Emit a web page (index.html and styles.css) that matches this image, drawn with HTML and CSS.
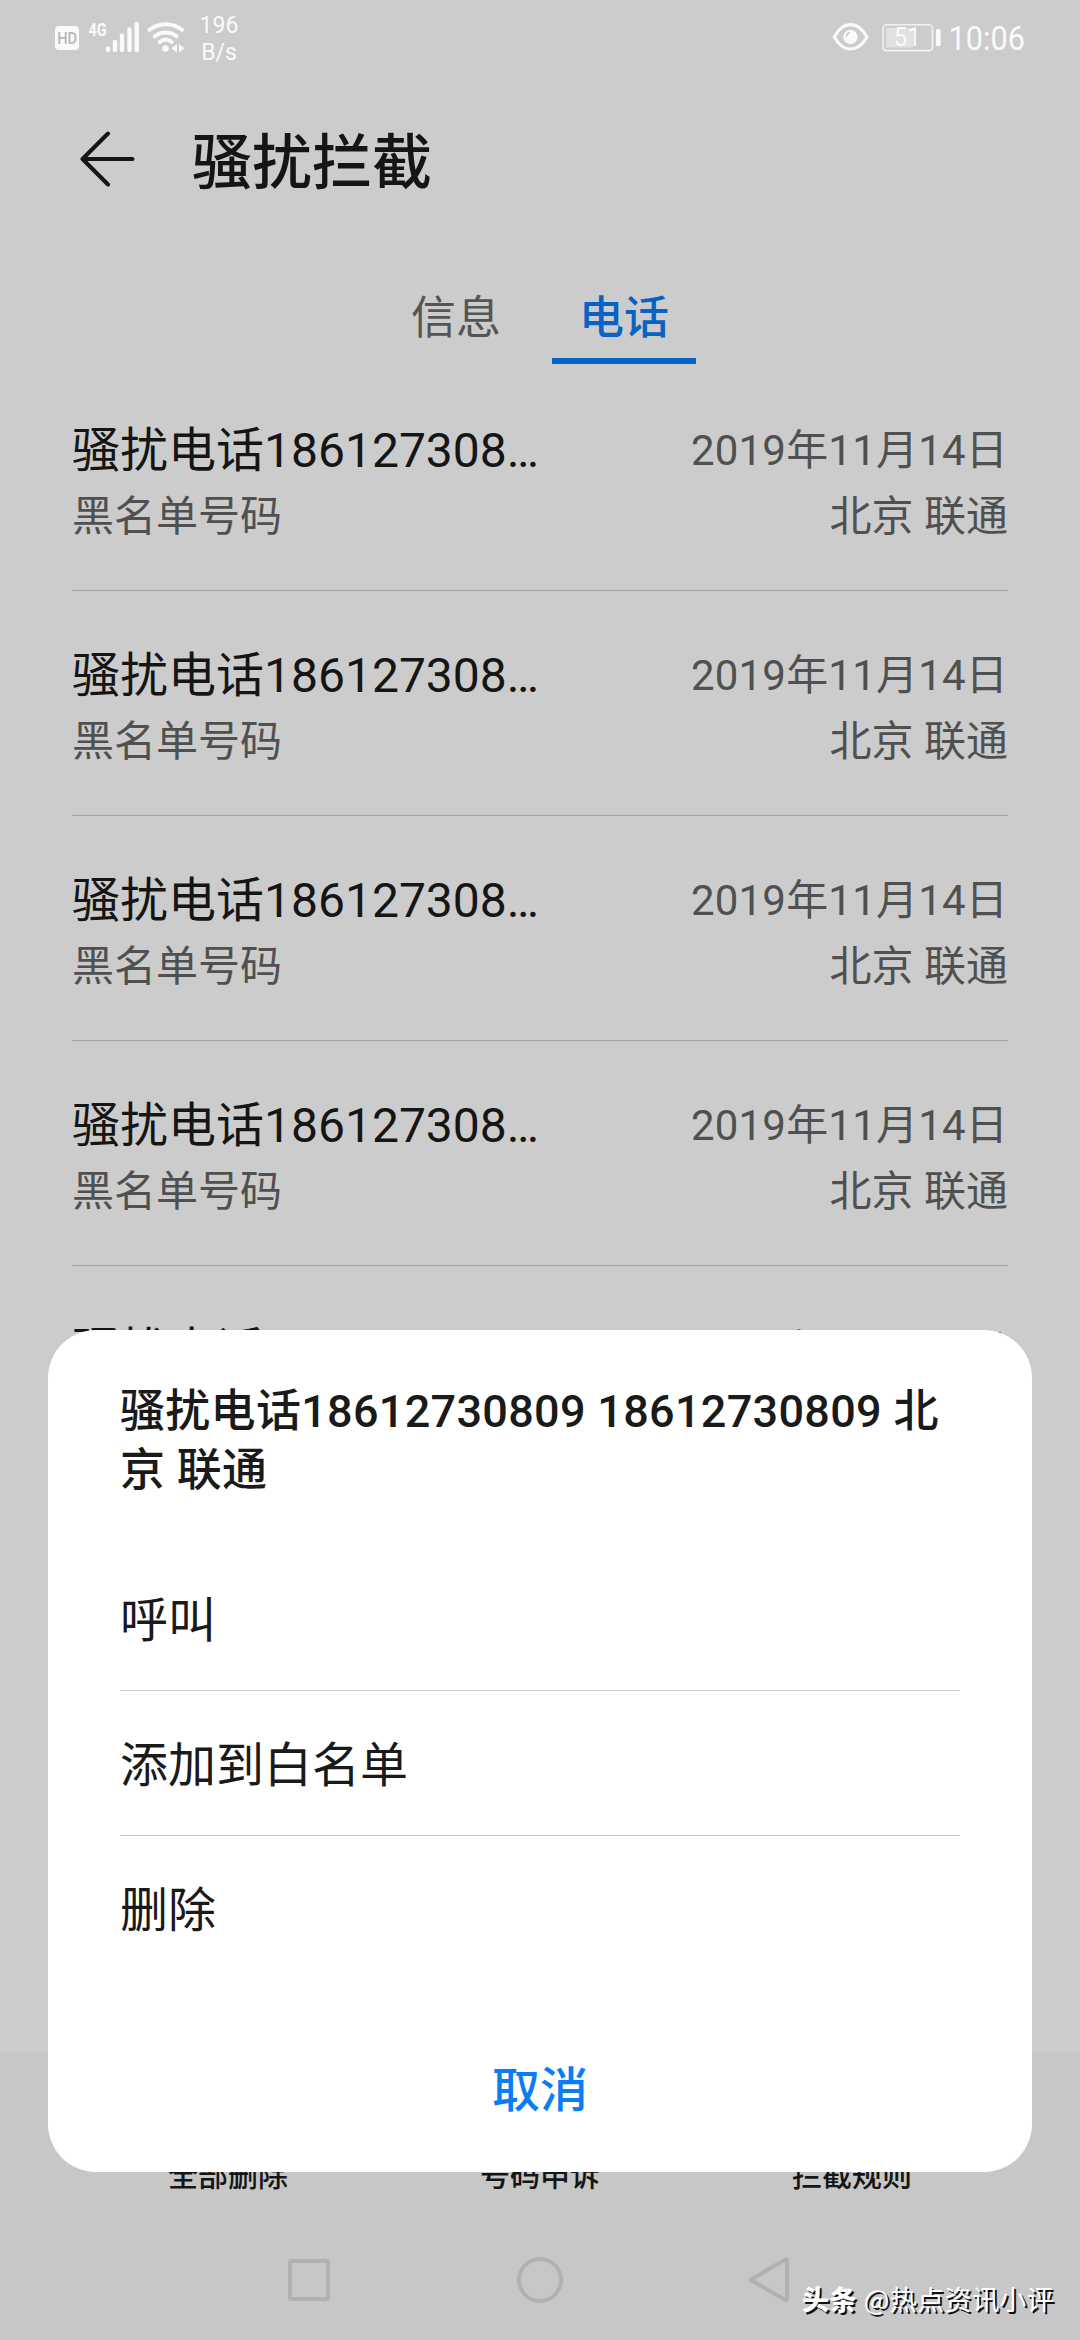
FILE: index.html
```html
<!DOCTYPE html>
<html lang="zh-CN">
<head>
<meta charset="utf-8">
<title>骚扰拦截</title>
<link rel="stylesheet" href="styles.css">
</head>
<body>
<div class="screen">
  <header class="status">
    <svg class="status-left" width="132" height="75" viewBox="0 0 132 75">
      <rect x="0" y="26" width="24" height="24" rx="4" fill="#fafafa"/>
      <text class="hd" x="2.2" y="43.6" textLength="20" lengthAdjust="spacingAndGlyphs">HD</text>
      <text class="net" x="33.5" y="35.5" textLength="18" lengthAdjust="spacingAndGlyphs">4G</text>
      <path d="M53 48.500V50M60 42V50M67 35.500V50M74.500 29.500V50M81.700 24V50" stroke="#fafafa" stroke-width="4.400" stroke-linecap="round"/>
      <g fill="none" stroke="#fafafa" stroke-width="4" stroke-linecap="round">
        <path d="M94.500 29.800C104 22.300 117.500 22.300 127 29.800"/>
        <path d="M99.800 36.300C106 31.200 115.500 31.200 121.700 36.300"/>
        <path d="M104.800 42C108.500 38.900 113 38.900 116.700 42"/>
      </g>
      <circle cx="110.500" cy="48.500" r="3.200" fill="#fafafa"/>
      <path d="M122 44V52.500L116.300 48.200ZM124 44L129.500 48.200L124 52.500Z" fill="#fafafa"/>
    </svg>
    <div class="speed"><span>196</span><span>B/s</span></div>
    <svg class="status-right" width="110" height="75" viewBox="0 0 110 75">
      <path d="M2.300 37C11 20.500 26 20.500 35 37C26 53 11 53 2.300 37Z" fill="none" stroke="#fafafa" stroke-width="3.200" stroke-linejoin="round"/>
      <circle cx="18.500" cy="37" r="7.200" fill="#fafafa"/>
      <path d="M14.500 36.500Q14.800 33 18 32.600" fill="none" stroke="#cccccc" stroke-width="1.700"/>
      <rect x="51" y="24.800" width="49.500" height="25.800" rx="3.500" fill="none" stroke="#f2f2f2" stroke-width="1.600"/>
      <rect x="54" y="28" width="27" height="19.500" fill="#e1e1e1"/>
      <rect x="104" y="29" width="4.600" height="17" rx="1.500" fill="#fafafa"/>
      <text class="battery" x="61.800" y="46" textLength="27" lengthAdjust="spacingAndGlyphs">51</text>
    </svg>
    <div class="clock">10:06</div>
  </header>

  <div class="title-bar">
    <svg class="back" width="56" height="56" viewBox="0 0 56 56">
      <path d="M52.500 28H3M28 2.500L2.500 28L28 53.500" fill="none" stroke="#151515" stroke-width="4" stroke-linecap="round" stroke-linejoin="round"/>
    </svg>
    <h1>骚扰拦截</h1>
  </div>

  <nav class="tabs">
    <span class="tab">信息</span>
    <span class="tab active">电话</span>
  </nav>

  <main class="list">
    <div class="row"><div class="line"><span class="name">骚扰电话186127308…</span><span class="date">2019年11月14日</span></div><div class="line sub"><span>黑名单号码</span><span>北京 联通</span></div></div>
    <div class="row"><div class="line"><span class="name">骚扰电话186127308…</span><span class="date">2019年11月14日</span></div><div class="line sub"><span>黑名单号码</span><span>北京 联通</span></div></div>
    <div class="row"><div class="line"><span class="name">骚扰电话186127308…</span><span class="date">2019年11月14日</span></div><div class="line sub"><span>黑名单号码</span><span>北京 联通</span></div></div>
    <div class="row"><div class="line"><span class="name">骚扰电话186127308…</span><span class="date">2019年11月14日</span></div><div class="line sub"><span>黑名单号码</span><span>北京 联通</span></div></div>
    <div class="row"><div class="line"><span class="name">骚扰电话186127308…</span><span class="date">2019年11月14日</span></div></div>
  </main>

  <footer class="bottom">
    <div class="toolbar"><span>全部删除</span><span>号码申诉</span><span>拦截规则</span></div>
    <svg class="navkeys" width="504" height="50" viewBox="0 0 504 50" fill="none" stroke="#b1b1b1" stroke-width="4" stroke-linejoin="round">
      <rect x="2" y="6" width="38" height="38" rx="1"/>
      <circle cx="252" cy="25" r="21"/>
      <path d="M462.500 24.800L497.500 4.500Q499 4 499 5.500V44Q499 46 497.500 45Z"/>
    </svg>
  </footer>

  <section class="dialog">
    <h2>骚扰电话18612730809 18612730809 北京 联通</h2>
    <ul class="actions">
      <li>呼叫</li>
      <li>添加到白名单</li>
      <li>删除</li>
    </ul>
    <div class="cancel">取消</div>
  </section>

  <div class="watermark"><b>头条</b><span>@热点资讯小评</span></div>
</div>
</body>
</html>
```
FILE: styles.css
```css
* { box-sizing: border-box; margin: 0; padding: 0; }

body {
  font-family: Roboto, "Noto Sans CJK SC", sans-serif;
  color: #151515;
  background: #cccccc;
}

.screen {
  position: relative;
  width: 1080px;
  height: 2340px;
  overflow: hidden;
  display: flex;
  flex-direction: column;
  background: #cccccc;
}

.status {
  height: 75px;
  flex: none;
  display: flex;
  padding-left: 55px;
  color: #fafafa;
}
.hd { font: 500 16px Roboto, sans-serif; fill: #b8b8b8; }
.net { font: 700 19px Roboto, sans-serif; fill: #fafafa; }
.battery { font: 400 26px Roboto, sans-serif; fill: #fafafa; }
.speed {
  width: 64px;
  padding-top: 12px;
  display: flex;
  flex-direction: column;
  text-align: center;
  font-size: 23px;
  line-height: 27px;
}
.status-right { margin-left: 581px; }
.clock {
  padding-left: 7px;
  font-size: 33px;
  line-height: 77px;
  transform: scaleX(0.93);
  transform-origin: left;
}

.title-bar {
  height: 175px;
  flex: none;
  display: flex;
  align-items: center;
  gap: 56px;
  padding-left: 80px;
}
.back { margin-top: -7px; }
h1 {
  padding-top: 2px;
  font-size: 60px;
  font-weight: 500;
  line-height: 80px;
}

.tabs {
  height: 114px;
  flex: none;
  display: flex;
  justify-content: center;
  gap: 24px;
}
.tab {
  width: 144px;
  height: 114px;
  padding-top: 39px;
  text-align: center;
  font-size: 45px;
  line-height: 60px;
  color: #555555;
}
.tab.active {
  font-weight: 500;
  color: #0863c7;
  border-bottom: 6px solid #0863c7;
}

.list {
  height: 1688px;
  flex: none;
  overflow: hidden;
  padding: 2px 72px 0;
}
.row {
  height: 225px;
  padding-top: 52px;
  border-bottom: 1px solid #a3a3a3;
}
.line {
  height: 66px;
  display: flex;
  justify-content: space-between;
  line-height: 66px;
  color: #505050;
  font-size: 42px;
}
.name { font-size: 48px; color: #151515; }
.date { letter-spacing: 0.2px; }

.bottom {
  height: 288px;
  flex: none;
  background: #c7c7c7;
  display: flex;
  flex-direction: column;
  align-items: center;
}
.toolbar {
  width: 936px;
  height: 203px;
  display: grid;
  grid-template-columns: repeat(3, 1fr);
  padding-top: 104px;
  text-align: center;
  font-size: 30px;
  font-weight: 500;
  line-height: 40px;
}

.dialog {
  position: absolute;
  left: 48px;
  top: 1330px;
  width: 984px;
  height: 842px;
  padding: 52px 72px 0;
  border-radius: 48px;
  background: #ffffff;
  color: #1a1a1a;
}
h2 {
  height: 164px;
  font-size: 45px;
  font-weight: 500;
  line-height: 59px;
  letter-spacing: 0.3px;
}
.actions { list-style: none; }
.actions li {
  height: 145px;
  padding-top: 5px;
  font-size: 48px;
  line-height: 139px;
  border-bottom: 1px solid #cccccc;
}
.actions li:last-child { border-bottom: none; }
.cancel {
  height: 80px;
  margin-top: 70px;
  text-align: center;
  font-size: 48px;
  font-weight: 500;
  line-height: 80px;
  color: #0a7df5;
}

.watermark {
  position: absolute;
  left: 802px;
  top: 2279px;
  display: flex;
  gap: 7px;
  font-family: "Noto Sans CJK SC", sans-serif;
  font-size: 27px;
  line-height: 40px;
  letter-spacing: 0.4px;
  color: #ffffff;
  text-shadow: 2px 2px 0 #111111;
}
.watermark b { font-weight: 900; }
```
